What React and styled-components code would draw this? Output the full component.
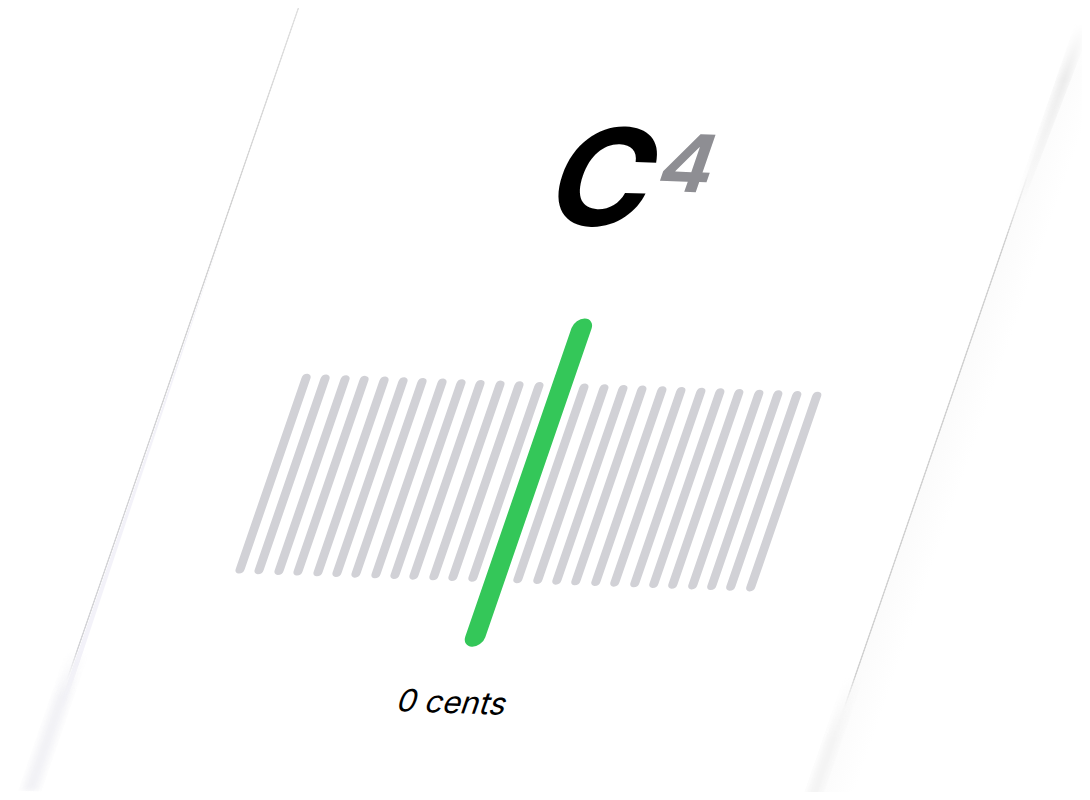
import React from 'react'
import styled, { createGlobalStyle } from 'styled-components';


const TICKS_PER_SIDE = 13;

const Ticks = () => {
  const ticks = Array.from({ length: TICKS_PER_SIDE }, (_, i) => i);
  return ticks.map((i) => <Tick key={i} />)
}

const App = () => {
  return (
    <>
      <GlobalStyle />
      <Stage>
        <Panel>
          <LeftEdge>
            <LeftLine />
            <LeftGlow />
            <LeftFade />
          </LeftEdge>
          <Tuner>
            <Note>C<Octave>4</Octave></Note>
            <Meter>
              <Ticks />
              <Needle />
              <Ticks />
            </Meter>
            <Cents>0 cents</Cents>
          </Tuner>
          <RightEdge>
            <RightFadeTop />
            <RightLine />
            <RightFadeBottom />
          </RightEdge>
        </Panel>
      </Stage>
    </>
  )
}

export default App

const GlobalStyle = createGlobalStyle`
  body {
    margin: 8px;
    background-color: #fff;
    font-family: Inter, "Liberation Sans", sans-serif;
  }
`
const Stage = styled.main`
  box-sizing: border-box;
  height: calc(100vh - 16px);
  padding-left: 24px;
  display: flex;
  justify-content: center;
  align-items: center;
  overflow: hidden;
`
/* the whole card lies tilted */
const Panel = styled.section`
  flex: none;
  display: grid;
  grid-template-columns: 16px 1fr 40px;
  width: calc(100% - 218px);
  margin-right: -40px;
  margin-left: -16px;
  transform: rotate(2deg) skewX(-17deg);
`
const Tuner = styled.div`
  display: flex;
  flex-direction: column;
  align-items: center;
  padding: 104px 0 84px;
`
const Note = styled.h1`
  display: flex;
  align-items: flex-start;
  margin: 0;
  font-size: 136px;
  line-height: 164px;
  font-weight: 700;
  color: #000;
`
const Octave = styled.sup`
  font-size: 80px;
  line-height: 130px;
  font-weight: 700;
  color: #8e8e93;
`
const Meter = styled.div`
  display: flex;
  justify-content: space-between;
  align-items: center;
  width: 520px;
  margin-top: 60px;
`
const Tick = styled.div`
  width: 9px;
  height: 202px;
  border-radius: 5px;
  background-color: #d1d1d6;
`
const Needle = styled.div`
  width: 20px;
  height: 332px;
  margin: 0 -2px;
  border-radius: 10px;
  background-color: #34c759;
`
const Cents = styled.p`
  margin: 36px 0 0;
  font-size: 31px;
  line-height: 40px;
  color: #000;
`
const LeftEdge = styled.div`
  display: flex;
  flex-direction: column;
  position: relative;
`
const LeftLine = styled.div`
  flex: 1;
  width: 2px;
  align-self: flex-end;
  background: linear-gradient(#e2e2e2, #d4d4d4 30%, #d4d4d8);
  mask-image: linear-gradient(to top, transparent, #000 32px);
`
const LeftGlow = styled.div`
  position: absolute;
  left: 100%;
  top: 240px;
  bottom: 80px;
  width: 6px;
  background-color: #f3f2f9;
  clip-path: polygon(0 0, 100% 100%, 0 100%);
  mask-image: linear-gradient(to top, transparent, #000 48px);
`
const LeftFade = styled.div`
  height: 144px;
  width: 24px;
  margin: -32px 0 0 4px;
  background: linear-gradient(to right, transparent, #eeeef3, transparent);
  filter: blur(3px);
  mask-image: linear-gradient(transparent, #000 48px);
`
const RightEdge = styled.div`
  display: flex;
  flex-direction: column;
  background: linear-gradient(to right, #fbfbfb, #fff);
  mask-image: linear-gradient(transparent 16px, #000 72px);
  mask-clip: no-clip;
`
const RightFadeTop = styled.div`
  height: 200px;
  width: 20px;
  margin: 0 0 -32px -6px;
  background: linear-gradient(to right, #fff, #e9e9e9, #fbfbfb);
  filter: blur(2px);
  clip-path: polygon(10% 0, 100% 0, 60% 100%, 10% 100%);
  mask-image: linear-gradient(to top, transparent, #000 128px);
`
const RightLine = styled.div`
  flex: 1;
  width: 2px;
  background-color: #d2d2d2;
  mask-image: linear-gradient(transparent, #000 64px, #000 calc(100% - 32px), transparent);
`
const RightFadeBottom = styled.div`
  height: 144px;
  width: 20px;
  margin: -32px 0 0 -10px;
  background: linear-gradient(to right, #fff, #f1f1f1, #fbfbfb);
  filter: blur(3px);
  mask-image: linear-gradient(transparent, #000 64px);
`
